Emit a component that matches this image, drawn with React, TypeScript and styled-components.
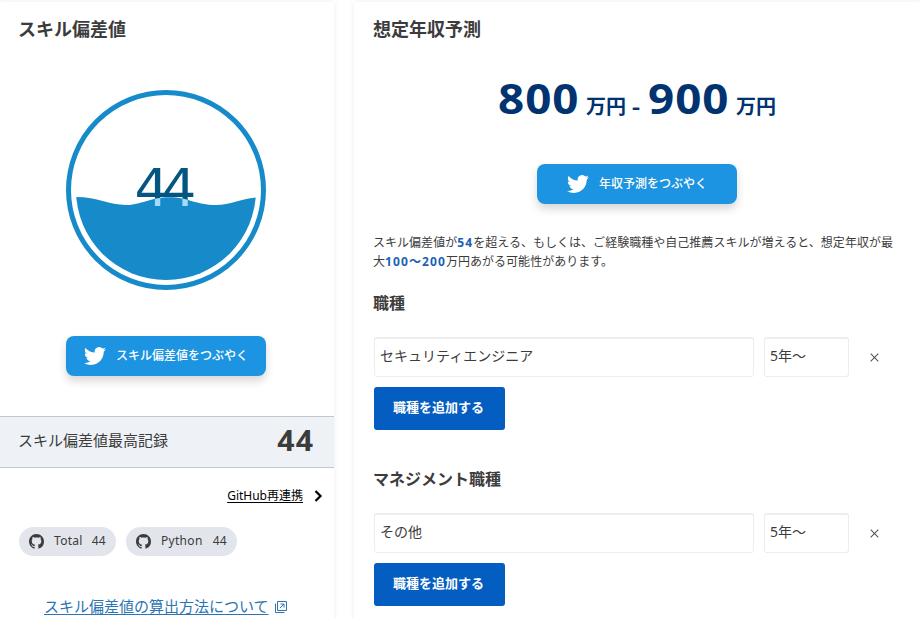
import React from 'react';
import styled, { createGlobalStyle } from 'styled-components';

const Global = createGlobalStyle`
  * { box-sizing: border-box; }
  html, body { margin: 0; height: 618px; overflow: hidden; background: #fff; }
  body { font-family: "Noto Sans", "Noto Sans CJK JP", sans-serif; color: #3c3c3c; }
`;

const Page = styled.div`
  display: grid;
  grid-template-columns: 334px 566px;
  column-gap: 20px;
  width: 920px;
  height: 618px;
  padding-top: 2px;
  overflow: hidden;
`;

const Card = styled.section<{ $inset?: boolean }>`
  display: flex;
  flex-direction: column;
  height: 680px;
  padding: 0 ${p => (p.$inset ? '20px' : '0')};
  background: #fff;
  box-shadow: 0 0 6px rgba(0, 0, 0, 0.08);
`;

const Title = styled.h2<{ $pad?: boolean }>`
  margin: 13px 0 0 -1px;
  padding-left: ${p => (p.$pad ? '19px' : '0')};
  font-size: 18px;
  line-height: 28px;
  font-weight: 700;
`;

const Gauge = styled.svg`
  display: block;
  width: 200px;
  height: 200px;
  margin: 47px 0 0 66px;
  font-family: "DejaVu Sans", sans-serif;
  font-size: 51px;
`;

const TweetButton = styled.a`
  display: flex;
  align-items: center;
  justify-content: center;
  gap: 10px;
  width: 200px;
  height: 40px;
  border-radius: 8px;
  background: #1d94e1;
  color: #fff;
  font-size: 12px;
  line-height: 18px;
  font-weight: 500;
  box-shadow: 0 5px 9px rgba(0, 0, 0, 0.16);
  svg { display: block; width: 22px; height: 22px; }
`;

const GaugeAction = styled.div`
  margin: 46px 0 0 66px;
`;

const Record = styled.div`
  display: flex;
  align-items: center;
  justify-content: space-between;
  height: 52px;
  margin-top: 40px;
  padding: 0 21px 5px 18px;
  border: solid #c3c8cc;
  border-width: 1px 0;
  background: #eef2f6;
  font-size: 15px;
`;

const RecordScore = styled.strong`
  font-size: 28px;
  line-height: 40px;
  letter-spacing: 1px;
  margin-right: -1px;
  transform: scaleX(1.08);
  transform-origin: right;
`;

const Relink = styled.a`
  display: flex;
  align-items: center;
  justify-content: flex-end;
  gap: 11px;
  height: 20px;
  margin-top: 18px;
  padding-right: 11px;
  color: #000;
  font-size: 12px;
  line-height: 20px;
  span { text-decoration: underline; text-underline-offset: 2px; }
`;

const Tags = styled.div`
  display: flex;
  gap: 10px;
  margin: 21px 0 0 19px;
`;

const Tag = styled.span<{ $width: number }>`
  display: flex;
  align-items: center;
  width: ${p => p.$width}px;
  height: 29px;
  padding: 0 10px 2px;
  border-radius: 15px;
  background: #e2e5eb;
  font-size: 12px;
  line-height: 18px;
  letter-spacing: 0.3px;
  svg { width: 15px; height: 15px; margin: 2px 10px 0 0; fill: #3c3c3c; }
  b { margin-left: auto; font-weight: 400; }
`;

const MethodLink = styled.a`
  display: flex;
  align-items: center;
  gap: 6px;
  height: 24px;
  margin: 38px 0 0 44px;
  color: #2b75b5;
  font-size: 15px;
  line-height: 24px;
  span { text-decoration: underline; text-underline-offset: 2px; text-decoration-thickness: 1px; }
  svg { margin-top: 2px; }
`;

const Income = styled.div`
  display: flex;
  align-items: baseline;
  height: 60px;
  margin: 25px 0 0 124px;
  color: #00336f;
  font-weight: 700;
  font-size: 20px;
  line-height: 60px;
`;

const Amount = styled.span`
  width: 87px;
  font-size: 42px;
  letter-spacing: 0.9px;
  transform: scaleX(1.09);
  transform-origin: left;
`;

const Unit = styled.span`
  width: 40px;
  margin-left: 1px;
`;

const Dash = styled.span`
  width: 9px;
  margin: 0 7px 0 6px;
  transform: scaleX(1.25);
  transform-origin: left;
`;

const Center = styled.div`
  display: flex;
  justify-content: center;
  margin-top: 36px;
`;

const Note = styled.p`
  margin: 29px 0 0 -1px;
  font-size: 12px;
  line-height: 19px;
  letter-spacing: 0.03px;
  white-space: nowrap;
  b { color: #1a5fb4; letter-spacing: 1.1px; }
`;

const Heading = styled.h3<{ $top: number }>`
  margin: ${p => p.$top}px 0 0 -1px;
  font-size: 16px;
  line-height: 24px;
  font-weight: 700;
`;

const Row = styled.div`
  display: flex;
  gap: 10px;
  height: 40px;
  margin-top: 22px;
`;

const Field = styled.div<{ $width: number }>`
  width: ${p => p.$width}px;
  height: 40px;
  padding: 5px 5px 0;
  border: 1px solid #ededed;
  border-top-width: 2px;
  border-radius: 3px;
  background: #fff;
  font-size: 14px;
  line-height: 24px;
`;

const Remove = styled.span`
  display: flex;
  align-items: center;
  justify-content: center;
  width: 30px;
  height: 40px;
`;

const AddButton = styled.button`
  align-self: flex-start;
  flex: none;
  width: 131px;
  height: 43px;
  margin: 10px 0 0;
  padding: 0 2px 3px 0;
  border: 0;
  border-radius: 3px;
  background: #045dc1;
  color: #fff;
  font: 700 13px/20px "Noto Sans", "Noto Sans CJK JP", sans-serif;
`;

const Twitter = () => (
  <svg viewBox="0 0 24 24" fill="#fff">
    <path d="M23.95 4.57a10 10 0 0 1-2.82.77 4.96 4.96 0 0 0 2.16-2.72c-.95.55-2 .95-3.13 1.18a4.92 4.92 0 0 0-8.38 4.48C7.69 8.1 4.07 6.13 1.64 3.16a4.82 4.82 0 0 0-.67 2.48c0 1.71.87 3.21 2.19 4.1a4.9 4.9 0 0 1-2.23-.62v.06a4.92 4.92 0 0 0 3.95 4.83 5 5 0 0 1-2.21.08 4.94 4.94 0 0 0 4.6 3.42A9.87 9.87 0 0 1 0 19.54a13.99 13.99 0 0 0 7.56 2.21c9.05 0 13.99-7.5 13.99-13.98 0-.21 0-.42-.02-.63a9.94 9.94 0 0 0 2.46-2.55z" />
  </svg>
);

const GitHub = () => (
  <svg viewBox="0 0 16 16">
    <path d="M8 0C3.58 0 0 3.58 0 8c0 3.54 2.29 6.53 5.47 7.59.4.07.55-.17.55-.38 0-.19-.01-.82-.01-1.49-2.01.37-2.53-.49-2.69-.94-.09-.23-.48-.94-.82-1.13-.28-.15-.68-.52-.01-.53.63-.01 1.08.58 1.23.82.72 1.21 1.87.87 2.33.66.07-.52.28-.87.51-1.07-1.78-.2-3.64-.89-3.64-3.95 0-.87.31-1.59.82-2.15-.08-.2-.36-1.02.08-2.12 0 0 .67-.21 2.2.82.64-.18 1.32-.27 2-.27s1.36.09 2 .27c1.53-1.04 2.2-.82 2.2-.82.44 1.1.16 1.92.08 2.12.51.56.82 1.27.82 2.15 0 3.07-1.87 3.75-3.65 3.95.29.25.54.73.54 1.48 0 1.07-.01 1.93-.01 2.2 0 .21.15.46.55.38A8.01 8.01 0 0 0 16 8c0-4.42-3.58-8-8-8z" />
  </svg>
);

const WAVE =
  'M5 107.2C30 106 42 115 60 115C75 115 84 107.2 104 107.2C122 107.2 130 115 150 115C166 115 176 107.8 195 107.2V200H5Z';

const Score = ({ fill, hidden }: { fill: string; hidden?: boolean }) => (
  <text
    transform="translate(99.5 116.3) scale(1.06 1)"
    textAnchor="middle"
    textLength="58.5"
    fill={fill}
    aria-hidden={hidden}
  >
    44
  </text>
);

const SkillGauge = () => (
  <Gauge viewBox="0 0 200 200">
    <defs>
      <clipPath id="wave"><path d={WAVE} /></clipPath>
      <clipPath id="bowl"><circle cx="100" cy="100" r="90" /></clipPath>
    </defs>
    <circle cx="100" cy="100" r="97.5" fill="none" stroke="#178bca" strokeWidth="5" />
    <Score fill="#045681" />
    <g clipPath="url(#bowl)">
      <path d={WAVE} fill="#178bca" />
      <g clipPath="url(#wave)">
        <Score fill="#a4dbf8" hidden />
      </g>
    </g>
  </Gauge>
);

const JobSection = ({ title, job, top }: { title: string; job: string; top: number }) => (
  <>
    <Heading $top={top}>{title}</Heading>
    <Row>
      <Field $width={380}>{job}</Field>
      <Field $width={85}>5年～</Field>
      <Remove>
        <svg width="9" height="9" viewBox="0 0 9 9" stroke="#555" strokeWidth="1.1"><path d="M.7.7l7.6 7.6M8.3.7L.7 8.3" /></svg>
      </Remove>
    </Row>
    <AddButton>職種を追加する</AddButton>
  </>
);

export default function App() {
  return (
    <>
      <Global />
      <Page>
        <Card>
          <Title $pad>スキル偏差値</Title>
          <SkillGauge />
          <GaugeAction>
            <TweetButton><Twitter />スキル偏差値をつぶやく</TweetButton>
          </GaugeAction>
          <Record>
            <span>スキル偏差値最高記録</span>
            <RecordScore>44</RecordScore>
          </Record>
          <Relink>
            <span>GitHub再連携</span>
            <svg width="9" height="12" viewBox="0 0 9 12" fill="none" stroke="#000" strokeWidth="2.2"><path d="M1.5 1l5 5-5 5" /></svg>
          </Relink>
          <Tags>
            <Tag $width={97}><GitHub />Total<b>44</b></Tag>
            <Tag $width={111}><GitHub />Python<b>44</b></Tag>
          </Tags>
          <MethodLink>
            <span>スキル偏差値の算出方法について</span>
            <svg width="12" height="12" viewBox="0 0 12 12" fill="none" stroke="#2b75b5">
              <path d="M2.5.5h9v9h-9zM.5 2.5v9h9M5 7l4-4M5.5 3H9v3.5" />
            </svg>
          </MethodLink>
        </Card>
        <Card $inset>
          <Title>想定年収予測</Title>
          <Income>
            <Amount>800</Amount><Unit>万円</Unit><Dash>-</Dash><Amount>900</Amount><Unit>万円</Unit>
          </Income>
          <Center>
            <TweetButton><Twitter />年収予測をつぶやく</TweetButton>
          </Center>
          <Note>
            スキル偏差値が<b>54</b>を超える、もしくは、ご経験職種や自己推薦スキルが増えると、想定年収が最<br />
            大<b>100～200</b>万円あがる可能性があります。
          </Note>
          <JobSection title="職種" job="セキュリティエンジニア" top={20} />
          <JobSection title="マネジメント職種" job="その他" top={37} />
        </Card>
      </Page>
    </>
  );
}
